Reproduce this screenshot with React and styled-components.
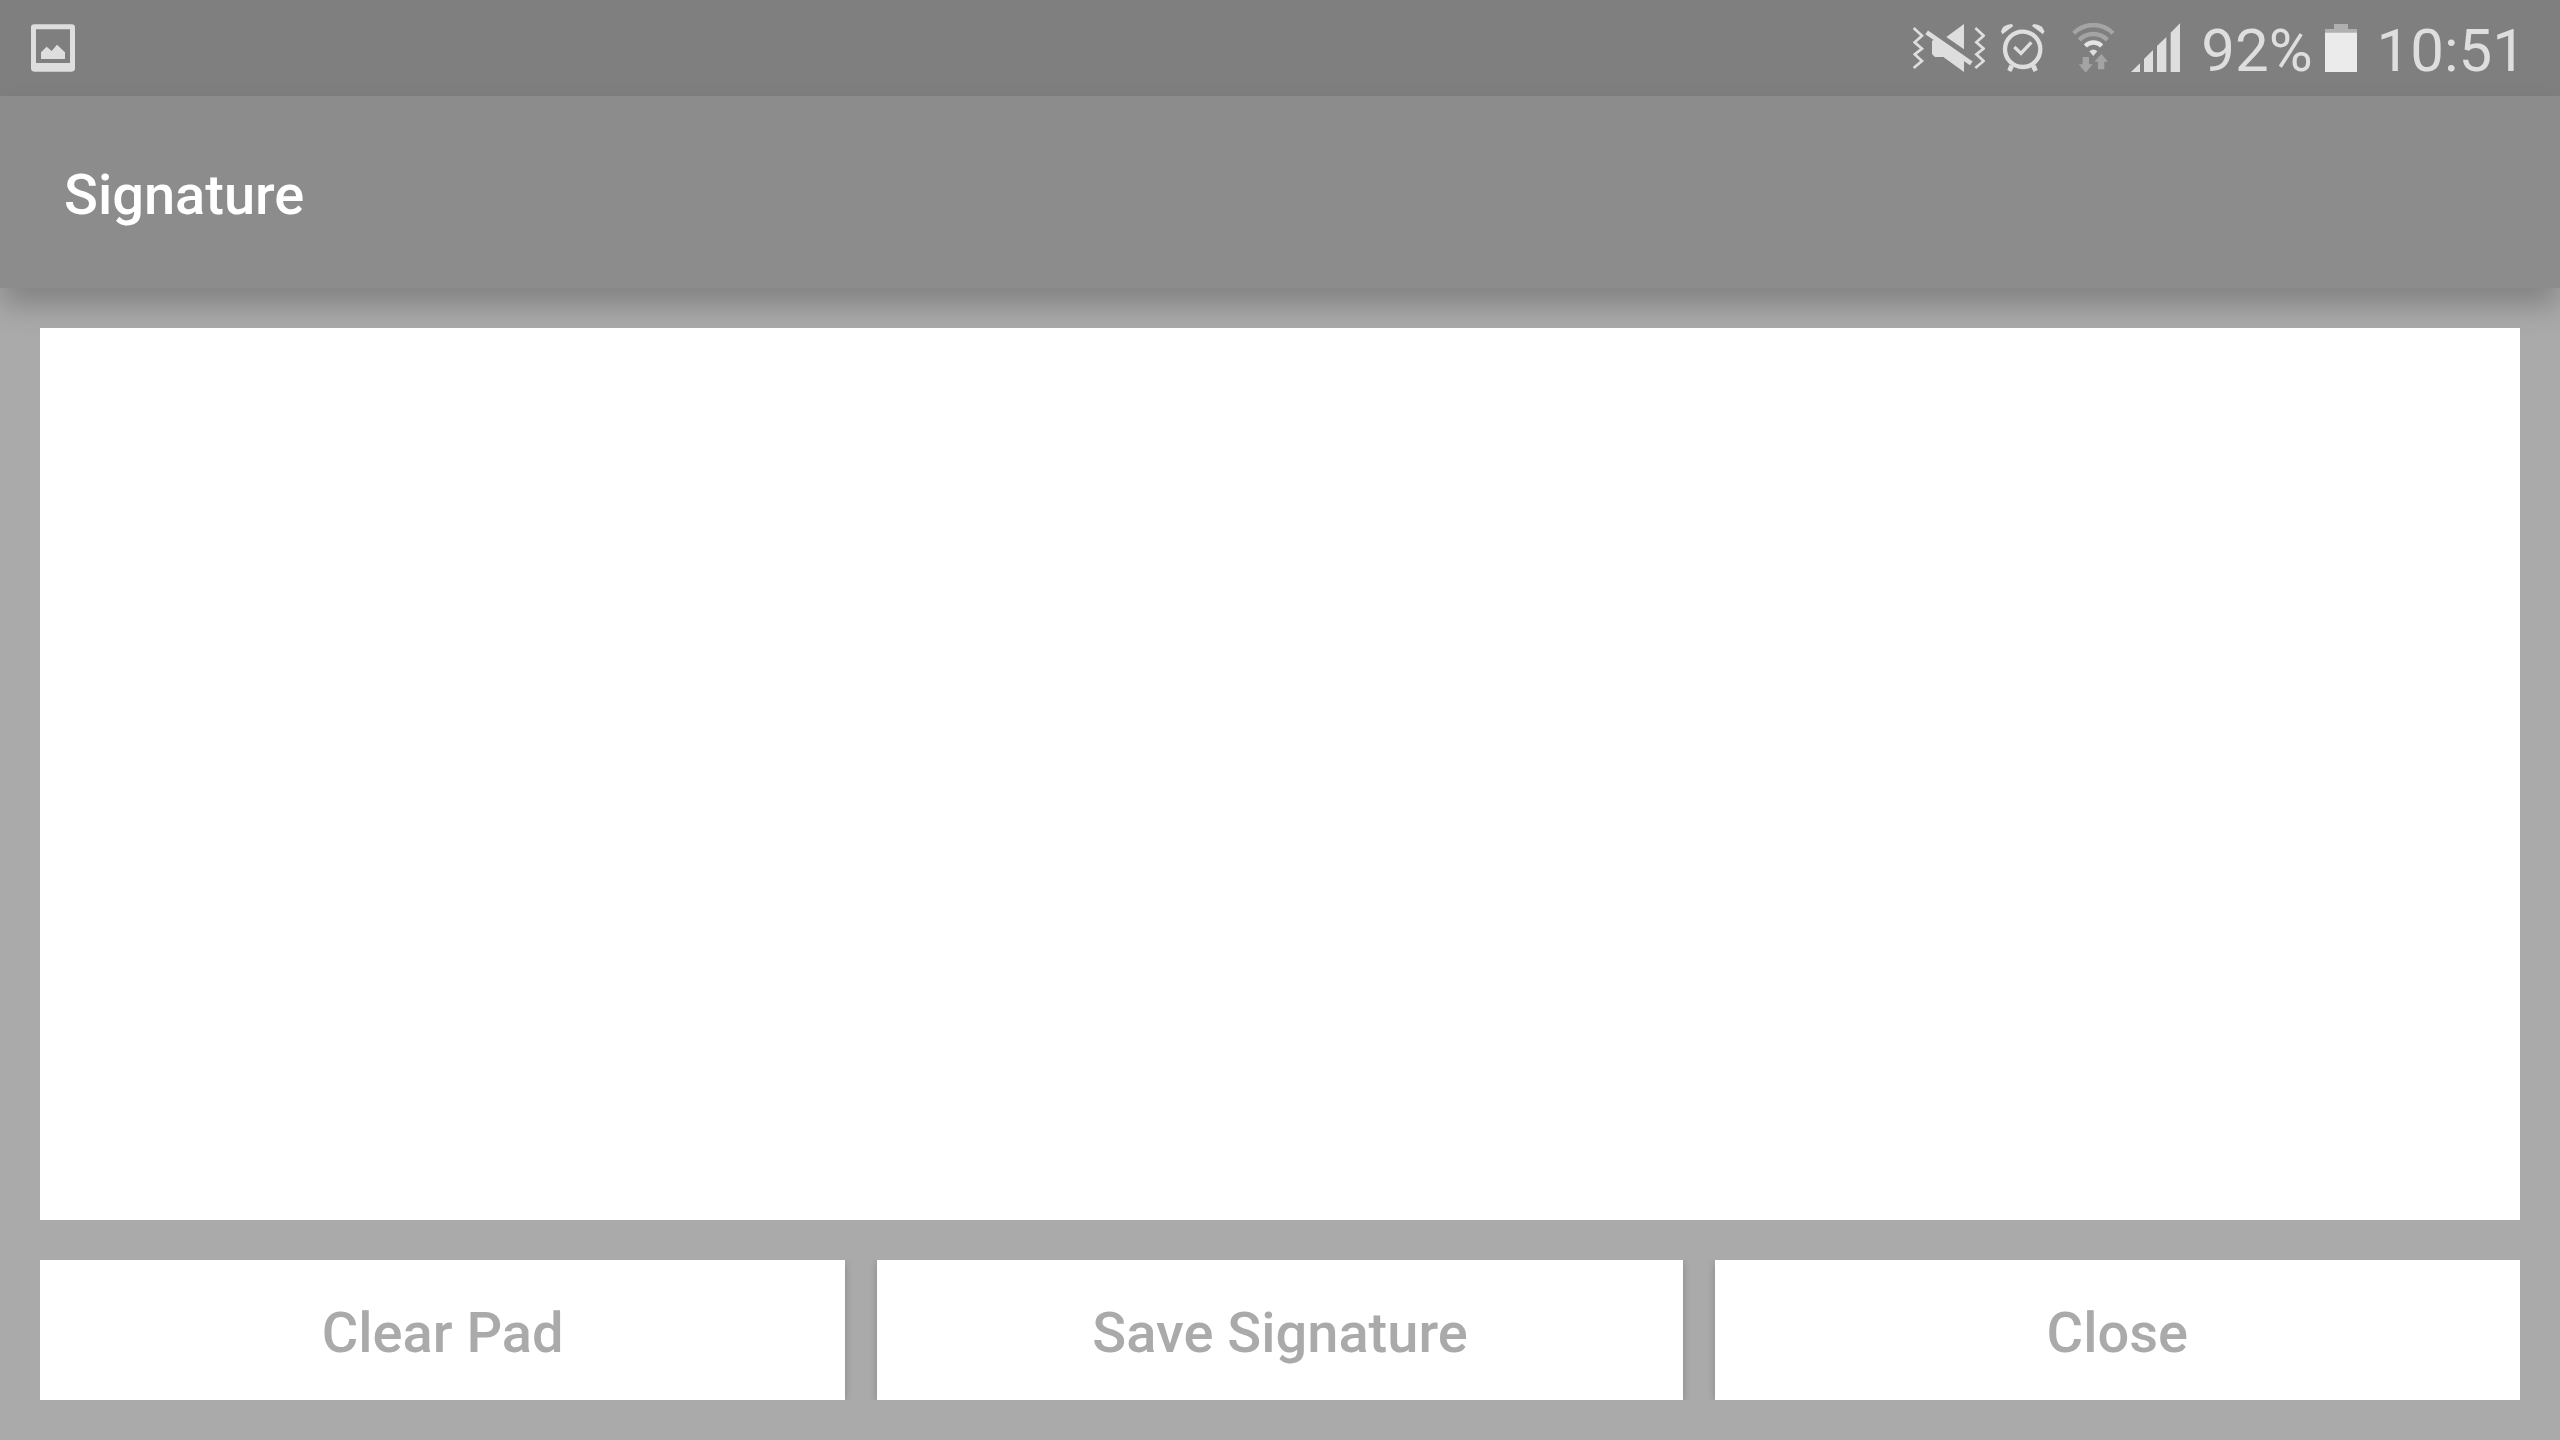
import React, { useRef } from "react";
import styled, { createGlobalStyle } from "styled-components";

const GlobalStyle = createGlobalStyle`
  * { box-sizing: border-box; }
  body {
    margin: 0;
    background: #aaa;
    font-family: Roboto, "Liberation Sans", sans-serif;
  }
`;

const Screen = styled.div`
  display: flex;
  flex-direction: column;
  min-height: 100vh;
`;

const StatusBar = styled.div`
  display: flex;
  justify-content: space-between;
  align-items: center;
  height: 96px;
  padding: 0 34px 0 24px;
  background: #7f7f7f;
  color: #dedede;
`;

const StatusGroup = styled.div`
  display: flex;
  align-items: center;
  gap: ${(p) => p.$gap}px;
`;

const StatusText = styled.span`
  padding-top: 6px;
  font-size: 60px;
  line-height: 64px;
`;

const StatusIcon = styled.svg`
  display: block;
  flex: none;
  width: ${(p) => p.$width}px;
  height: 50px;
  fill: #dedede;
`;

const AppBar = styled.header`
  display: flex;
  align-items: center;
  height: 192px;
  padding: 6px 64px 0;
  background: #8c8c8c;
  box-shadow: 0 18px 28px -1px rgba(0, 0, 0, 0.23);
`;

const Title = styled.h1`
  margin: 0;
  color: #fff;
  font-size: 56px;
  line-height: 64px;
  font-weight: 500;
`;

const Content = styled.main`
  flex: 1;
  display: flex;
  flex-direction: column;
  gap: 40px;
  padding: 40px;
`;

const Pad = styled.canvas`
  display: block;
  flex: 1 1 0;
  width: 100%;
  min-height: 0;
  background: #fff;
  touch-action: none;
`;

const Actions = styled.div`
  display: grid;
  grid-template-columns: repeat(3, 1fr);
  gap: 32px;
  overflow: hidden;
`;

const ActionButton = styled.button`
  height: 140px;
  padding: 6px 32px 0;
  border: 0;
  background: #fff;
  box-shadow: 0 2px 8px rgba(0, 0, 0, 0.2);
  color: #aaa;
  font-family: inherit;
  font-size: 56px;
  line-height: 64px;
  font-weight: 500;
`;

const ImageIcon = () => (
  <StatusIcon $width={52} viewBox="72 69 156 150" aria-hidden="true">
    <path
      fillRule="evenodd"
      d="M103 73H215Q225 73 225 83V205Q225 215 215 215H103Q93 215 93 205V83Q93 73 103 73ZM108 88V189H210V88Z"
    />
    <path d="M123 177V157L140 140L155 153L171 134L195 157V177Z" />
  </StatusIcon>
);

const MuteVibrateIcon = () => (
  <StatusIcon $width={72} viewBox="39 39 216 150" aria-hidden="true">
    <g fill="none" stroke="#dedede" strokeWidth="8">
      <path d="M41 54L66 77L44 97L66 116L44 133L66 153L41 174" />
      <path d="M226 54L251 77L229 97L251 116L229 133L251 153L226 174" />
      <path d="M80 67L214 160" strokeWidth="14" />
    </g>
    <path d="M192 42V118L139 81Z" />
    <path d="M103 88L192 150V186L130 141H105L96 132V93Z" />
  </StatusIcon>
);

const AlarmIcon = () => (
  <StatusIcon $width={44} viewBox="303 39 132 150" aria-hidden="true">
    <circle cx="368" cy="118" r="53" fill="none" stroke="#dedede" strokeWidth="13" />
    <path d="M343 111L363 130L394 97" fill="none" stroke="#dedede" strokeWidth="10" />
    <path d="M303 64Q307 44 335 42L340 48L307 73Z" />
    <path d="M433 64Q429 44 401 42L396 48L429 73Z" />
    <path d="M328 164L342 170L334 186L322 180Z" />
    <path d="M407 164L393 170L401 186L413 180Z" />
  </StatusIcon>
);

const WifiIcon = () => (
  <StatusIcon $width={54} viewBox="33 39 162 150" aria-hidden="true">
    <g fill="none" strokeWidth="13">
      <path d="M71 70A82 82 0 0 1 189 70" stroke="#a4a4a4" />
      <path d="M88 90A58 58 0 0 1 172 90" stroke="#a4a4a4" />
      <path d="M106 108A34 34 0 0 1 155 108" stroke="#e4e4e4" />
    </g>
    <path d="M118 124Q130 113 142 124L130 138Z" />
    <path d="M98 141H117V163H128L107 188L86 163H98Z" fill="#a4a4a4" />
    <path d="M144 178V155H133L154 132L174 155H163V178Z" fill="#a4a4a4" />
  </StatusIcon>
);

const SignalIcon = () => (
  <StatusIcon $width={50} viewBox="243 39 150 150" aria-hidden="true">
    <path d="M243 186L270 160V186Z" />
    <path d="M282 186V147L309 120V186Z" />
    <path d="M321 186V108L349 81V186Z" />
    <path d="M362 186V68L390 40V186Z" />
  </StatusIcon>
);

const BatteryIcon = () => (
  <StatusIcon $width={32} viewBox="402 69 96 150" aria-hidden="true">
    <path d="M429 72H471V87H498V99H402V87H429Z" fill="#b0b0b0" />
    <path d="M402 98H498V216H402Z" fill="#ebebeb" />
  </StatusIcon>
);

export default function App() {
  const padRef = useRef(null);

  const clearPad = () => {
    const pad = padRef.current;
    pad.getContext("2d").clearRect(0, 0, pad.width, pad.height);
  };

  return (
    <>
      <GlobalStyle />
      <Screen>
        <StatusBar>
          <ImageIcon />
          <StatusGroup $gap={20}>
            <StatusGroup $gap={16}>
              <MuteVibrateIcon />
              <AlarmIcon />
              <WifiIcon />
              <SignalIcon />
            </StatusGroup>
            <StatusGroup $gap={12}>
              <StatusText>92%</StatusText>
              <BatteryIcon />
            </StatusGroup>
            <StatusText>10:51</StatusText>
          </StatusGroup>
        </StatusBar>
        <AppBar>
          <Title>Signature</Title>
        </AppBar>
        <Content>
          <Pad ref={padRef} aria-label="Signature pad" />
          <Actions>
            <ActionButton type="button" onClick={clearPad}>Clear Pad</ActionButton>
            <ActionButton type="button">Save Signature</ActionButton>
            <ActionButton type="button">Close</ActionButton>
          </Actions>
        </Content>
      </Screen>
    </>
  );
}
